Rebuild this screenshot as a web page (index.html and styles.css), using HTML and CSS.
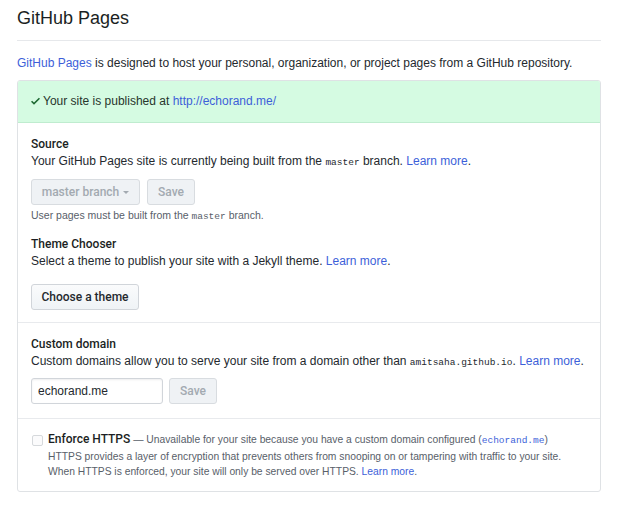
FILE: index.html
```html
<!DOCTYPE html>
<html lang="en">
<head>
<meta charset="utf-8">
<title>GitHub Pages</title>
<link rel="stylesheet" href="styles.css">
</head>
<body>
<div class="page">
  <div class="subhead">
    <h2 class="subhead-heading">GitHub Pages</h2>
  </div>
  <p class="intro"><a href="#" class="link">GitHub Pages</a> is designed to host your personal, organization, or project pages from a GitHub repository.</p>

  <div class="box">
    <div class="flash">
      <svg class="check" viewBox="0 0 12 16" width="9" height="12" aria-hidden="true"><path fill="currentColor" fill-rule="evenodd" d="M12 5l-8 8-4-4 1.5-1.5L4 10l6.5-6.5L12 5z"/></svg>
      <span>Your site is published at <a href="#" class="link">http://echorand.me/</a></span>
    </div>

    <div class="box-row">
      <h4 class="row-heading">Source</h4>
      <p class="row-desc">Your GitHub Pages site is currently being built from the <code class="mono">master</code> branch. <a href="#" class="link">Learn more</a>.</p>
      <div class="actions">
        <button class="btn btn-disabled btn-branch" disabled>master branch <span class="caret"></span></button>
        <button class="btn btn-disabled btn-save" disabled>Save</button>
      </div>
      <p class="note">User pages must be built from the <code class="mono">master</code> branch.</p>

      <h4 class="row-heading theme-heading">Theme Chooser</h4>
      <p class="row-desc">Select a theme to publish your site with a Jekyll theme. <a href="#" class="link">Learn more</a>.</p>
      <div class="actions actions-theme">
        <button class="btn btn-theme">Choose a theme</button>
      </div>
    </div>

    <div class="box-row domain-row">
      <h4 class="row-heading">Custom domain</h4>
      <p class="row-desc">Custom domains allow you to serve your site from a domain other than <code class="mono">amitsaha.github.io</code>. <a href="#" class="link">Learn more</a>.</p>
      <div class="actions domain-actions">
        <input class="input" type="text" value="echorand.me">
        <button class="btn btn-disabled btn-save" disabled>Save</button>
      </div>
    </div>

    <div class="box-row https-row">
      <div class="checkbox-line">
        <span class="checkbox"></span>
        <div class="https-text">
          <p class="https-title"><strong class="https-label">Enforce HTTPS</strong> — Unavailable for your site because you have a custom domain configured (<code class="mono mono-link">echorand.me</code>)</p>
          <p class="https-note">HTTPS provides a layer of encryption that prevents others from snooping on or tampering with traffic to your site.<br>When HTTPS is enforced, your site will only be served over HTTPS. <a href="#" class="link">Learn more</a>.</p>
        </div>
      </div>
    </div>
  </div>
</div>
</body>
</html>
```

FILE: styles.css
```css
* { box-sizing: border-box; }

body {
  margin: 0;
  background: #fff;
  color: #24292e;
  font-family: "Liberation Sans", Arial, sans-serif;
  font-size: 12px;
}

.page {
  width: 601px;
  padding: 6px 0 0 17px;
}

.subhead {
  border-bottom: 1px solid #e6e8eb;
  padding-bottom: 10px;
}

.subhead-heading {
  margin: 0;
  font-size: 18px;
  line-height: 24px;
  font-weight: 400;
  color: #1b1f23;
}

.intro {
  margin: 13px 0 8px;
  line-height: 18px;
}

.link {
  color: #3d5fd9;
  text-decoration: none;
}

.box {
  border: 1px solid #dfe2e5;
  border-radius: 3px;
  overflow: hidden;
}

.flash {
  display: flex;
  align-items: center;
  gap: 3px;
  background: #d5fbe2;
  border-bottom: 1px solid #bfeccf;
  padding: 12px 13px 13px;
  line-height: 16px;
  color: #27352c;
}

.check {
  color: #1f6a34;
  flex: none;
}

.box-row {
  padding: 13px 13px 12px;
}

.box-row + .box-row {
  border-top: 1px solid #e8eaed;
}

.domain-row {
  padding-top: 13px;
  padding-bottom: 14px;
}

.row-heading {
  margin: 0;
  font-family: Roboto, "Liberation Sans", sans-serif;
  font-size: 12px;
  line-height: 17px;
  font-weight: 500;
  color: #1b1f23;
}

.theme-heading {
  margin-top: 12px;
}

.row-desc {
  margin: 0;
  line-height: 17px;
}

.mono {
  font-family: "Liberation Mono", "DejaVu Sans Mono", monospace;
  font-size: 9.5px;
}

.mono-link {
  color: #3d5fd9;
}

.actions {
  display: flex;
  gap: 7px;
  margin-top: 8px;
}

.actions-theme {
  margin-top: 14px;
}

.domain-actions {
  gap: 6px;
  margin-top: 7px;
}

.btn {
  height: 26px;
  padding: 0;
  white-space: nowrap;
  font-family: Roboto, "Liberation Sans", sans-serif;
  font-size: 12px;
  font-weight: 500;
  color: #24292e;
  background: linear-gradient(#fafbfc, #eff3f6);
  border: 1px solid #d1d5da;
  border-radius: 3px;
  display: inline-flex;
  align-items: center;
  justify-content: center;
  gap: 4px;
}

.btn-disabled {
  color: #a3aab1;
  background: #eff2f5;
  border-color: #d8dce0;
}

.btn-branch { width: 109px; }
.btn-save { width: 48px; }
.btn-theme { width: 108px; }

.caret {
  width: 0;
  height: 0;
  border-left: 3px solid transparent;
  border-right: 3px solid transparent;
  border-top: 3px solid #a3aab1;
  margin-top: 1px;
}

.input {
  width: 132px;
  height: 26px;
  padding: 0 6px;
  font-family: inherit;
  font-size: 12px;
  color: #24292e;
  border: 1px solid #d1d5da;
  border-radius: 3px;
  box-shadow: inset 0 1px 2px rgba(27, 31, 35, 0.075);
}

.note {
  margin: 3px 0 0;
  font-size: 10.5px;
  line-height: 14px;
  color: #586069;
}

.https-row {
  padding-top: 13px;
  padding-bottom: 12px;
}

.checkbox-line {
  display: flex;
  align-items: flex-start;
  gap: 5px;
}

.checkbox {
  flex: none;
  width: 11px;
  height: 11px;
  margin-top: 3px;
  margin-left: 1px;
  border: 1px solid #d6d9dc;
  border-radius: 2px;
  background: #fbfbfc;
}

.https-text {
  font-size: 10.3px;
  color: #586069;
}

.https-title {
  margin: 0;
  line-height: 16px;
  white-space: nowrap;
}

.https-label {
  font-family: Roboto, "Liberation Sans", sans-serif;
  font-size: 12px;
  line-height: 14px;
  font-weight: 500;
  color: #1b1f23;
}

.https-note {
  margin: 0;
  line-height: 15px;
  white-space: nowrap;
}
```
